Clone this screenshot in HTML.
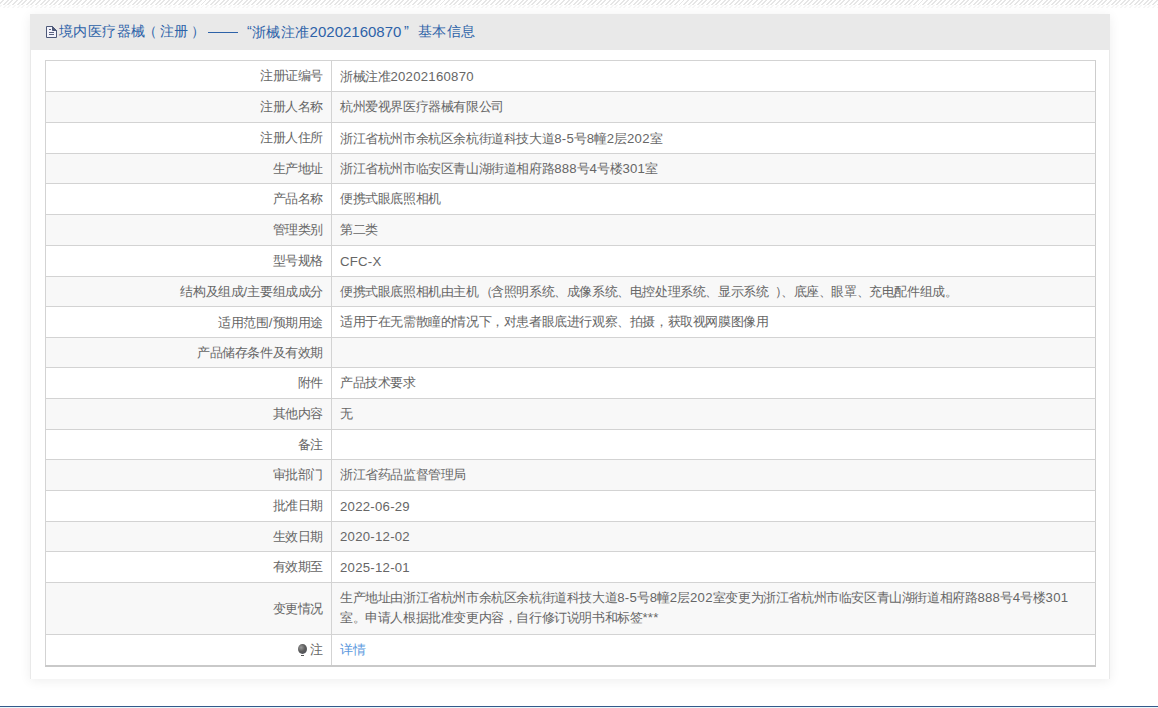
<!DOCTYPE html>
<html><head><meta charset="utf-8">
<style>
*{margin:0;padding:0;box-sizing:border-box}
html,body{width:1158px;height:708px;overflow:hidden;background:#fff;font-family:"Liberation Sans",sans-serif}
.stripe{position:absolute;left:0;top:0;width:1158px;height:5px;background:repeating-linear-gradient(-45deg,#e6e6e6 0 1.4px,#fff 1.4px 3.25px)}
.stripe2{position:absolute;left:0;top:5px;width:1158px;height:3px;opacity:.35;background:repeating-linear-gradient(-45deg,#e6e6e6 0 1.4px,#fff 1.4px 3.25px)}
.panel{position:absolute;left:30px;top:14px;width:1080px;height:665px;background:#fff;box-shadow:0 2px 11px rgba(0,0,0,.07);border-left:1px solid #e9e9e9;border-right:1px solid #e9e9e9}
.hd{position:absolute;left:30px;top:14px;width:1080px;height:36px;background:#e9e9e9;color:#2d62a8;font-size:14.4px;line-height:35px;white-space:nowrap}
.hd span{position:absolute;top:0}
.hd .c{letter-spacing:.4px}
.hd b{font-weight:normal;font-size:15px;letter-spacing:0}
.dash{position:absolute;left:178px;top:18px;width:30px;height:1px;background:#2d62a8}
.r{position:absolute;left:45px;width:1051px;border-top:1px solid #d3d3d3;border-left:1px solid #d3d3d3;border-right:1px solid #cdcdcd;font-size:12.6px;color:#666}
.l{position:absolute;left:0;top:0;width:286px;height:100%;text-align:right;padding-right:8px;border-right:1px solid #d3d3d3;white-space:nowrap}
.v{position:absolute;left:287px;top:0;right:0;height:100%;padding-left:7px;white-space:nowrap}
.v.m{padding-top:5px}
.tb{position:absolute;left:45px;top:665px;width:1051px;height:2px;background:#c9c9c9}
.bl{position:absolute;left:0;top:706px;width:1158px;height:1px;background:#34598a}
.bl2{position:absolute;left:0;top:707px;width:1158px;height:1px;background:#e8f8fc}
a{color:#5a98de;text-decoration:none}
.r u{text-decoration:none;letter-spacing:-0.4px}
.rp{font-style:normal;position:relative;left:7px}
.lp{font-style:normal;position:relative;left:1px}
.r b{font-weight:normal;font-size:13.2px;letter-spacing:.25px}
.bulb{display:inline-block;width:9px;height:12px;position:relative;vertical-align:-2px;margin-right:3px}
.bulb:before{content:"";position:absolute;left:0;top:0;width:9px;height:10px;border-radius:50%;background:radial-gradient(circle at 35% 35%,#9a9a9a 0,#5c5c5c 45%,#4a4d5a 100%)}
.bulb:after{content:"";position:absolute;left:3px;top:11px;width:3px;height:1px;background:#555}
</style></head><body>
<div class="stripe"></div><div class="stripe2"></div>
<div class="panel"></div>
<div class="hd">
<svg style="position:absolute;left:16px;top:12px" width="12" height="13" viewBox="0 0 12 13"><path d="M0.5 0.5H6.5L10.5 4.5V11.5H0.5Z" fill="#f3f3fa" stroke="#4d5878" stroke-width="1"/><path d="M6.5 0.5L10.5 4.5H6.5Z" fill="#4d5878" stroke="#4d5878" stroke-width="1" stroke-linejoin="round"/><path d="M3 3.5H5M3 6.5H8M3 8.5H8" stroke="#5a6280" stroke-width="1"/></svg>
<span class="c" style="left:29px">境内医疗器械</span><span style="left:113px">（</span><span class="c" style="left:130px">注册</span><span style="left:161px">）</span><i class="dash"></i><span style="left:217px">“</span><span class="c" style="left:222px">浙械注准<b>20202160870</b></span><span style="left:374px">”</span><span class="c" style="left:388px">基本信息</span>
</div>
<div class="r" style="top:60px;height:31px;background:#fff"><div class="l" style="line-height:31px"><u>注册证编号</u></div><div class="v" style="line-height:31px"><u>浙械注准</u><b>20202160870</b></div></div>
<div class="r" style="top:91px;height:31px;background:#f8f8f8"><div class="l" style="line-height:31px"><u>注册人名称</u></div><div class="v" style="line-height:31px"><u>杭州爱视界医疗器械有限公司</u></div></div>
<div class="r" style="top:122px;height:31px;background:#fff"><div class="l" style="line-height:31px"><u>注册人住所</u></div><div class="v" style="line-height:31px"><u>浙江省杭州市余杭区余杭街道科技大道</u><b>8-5</b><u>号</u><b>8</b><u>幢</u><b>2</b><u>层</u><b>202</b><u>室</u></div></div>
<div class="r" style="top:153px;height:30px;background:#f8f8f8"><div class="l" style="line-height:30px"><u>生产地址</u></div><div class="v" style="line-height:30px"><u>浙江省杭州市临安区青山湖街道相府路</u><b>888</b><u>号</u><b>4</b><u>号楼</u><b>301</b><u>室</u></div></div>
<div class="r" style="top:183px;height:31px;background:#fff"><div class="l" style="line-height:31px"><u>产品名称</u></div><div class="v" style="line-height:31px"><u>便携式眼底照相机</u></div></div>
<div class="r" style="top:214px;height:31px;background:#f8f8f8"><div class="l" style="line-height:31px"><u>管理类别</u></div><div class="v" style="line-height:31px"><u>第二类</u></div></div>
<div class="r" style="top:245px;height:31px;background:#fff"><div class="l" style="line-height:31px"><u>型号规格</u></div><div class="v" style="line-height:31px"><b>CFC-X</b></div></div>
<div class="r" style="top:276px;height:30px;background:#f8f8f8"><div class="l" style="line-height:30px"><u>结构及组成</u><b>/</b><u>主要组成成分</u></div><div class="v" style="line-height:30px"><u>便携式眼底照相机由主机<i class="lp">（</i>含照明系统、成像系统、电控处理系统、显示系统<i class="rp">）</i>、底座、眼罩、充电配件组成。</u></div></div>
<div class="r" style="top:306px;height:31px;background:#fff"><div class="l" style="line-height:31px"><u>适用范围</u><b>/</b><u>预期用途</u></div><div class="v" style="line-height:31px"><u>适用于在无需散瞳的情况下，对患者眼底进行观察、拍摄，获取视网膜图像用</u></div></div>
<div class="r" style="top:337px;height:30px;background:#f8f8f8"><div class="l" style="line-height:30px"><u>产品储存条件及有效期</u></div><div class="v" style="line-height:30px"></div></div>
<div class="r" style="top:367px;height:31px;background:#fff"><div class="l" style="line-height:31px"><u>附件</u></div><div class="v" style="line-height:31px"><u>产品技术要求</u></div></div>
<div class="r" style="top:398px;height:31px;background:#f8f8f8"><div class="l" style="line-height:31px"><u>其他内容</u></div><div class="v" style="line-height:31px"><u>无</u></div></div>
<div class="r" style="top:429px;height:30px;background:#fff"><div class="l" style="line-height:30px"><u>备注</u></div><div class="v" style="line-height:30px"></div></div>
<div class="r" style="top:459px;height:31px;background:#f8f8f8"><div class="l" style="line-height:31px"><u>审批部门</u></div><div class="v" style="line-height:31px"><u>浙江省药品监督管理局</u></div></div>
<div class="r" style="top:490px;height:31px;background:#fff"><div class="l" style="line-height:31px"><u>批准日期</u></div><div class="v" style="line-height:31px"><b>2022-06-29</b></div></div>
<div class="r" style="top:521px;height:30px;background:#f8f8f8"><div class="l" style="line-height:30px"><u>生效日期</u></div><div class="v" style="line-height:30px"><b>2020-12-02</b></div></div>
<div class="r" style="top:551px;height:31px;background:#fff"><div class="l" style="line-height:31px"><u>有效期至</u></div><div class="v" style="line-height:31px"><b>2025-12-01</b></div></div>
<div class="r" style="top:582px;height:52px;background:#f8f8f8"><div class="l" style="line-height:52px"><u>变更情况</u></div><div class="v m" style="line-height:20px"><u>生产地址由浙江省杭州市余杭区余杭街道科技大道</u><b>8-5</b><u>号</u><b>8</b><u>幢</u><b>2</b><u>层</u><b>202</b><u>室变更为浙江省杭州市临安区青山湖街道相府路</u><b>888</b><u>号</u><b>4</b><u>号楼</u><b>301</b><br><u>室。申请人根据批准变更内容，自行修订说明书和标签</u><b>***</b></div></div>
<div class="r" style="top:634px;height:31px;background:#fff"><div class="l" style="line-height:31px"><i class="bulb"></i><u>注</u></div><div class="v" style="line-height:31px"><a><u>详情</u></a></div></div>
<div class="tb"></div>
<div class="bl"></div><div class="bl2"></div>
</body></html>
